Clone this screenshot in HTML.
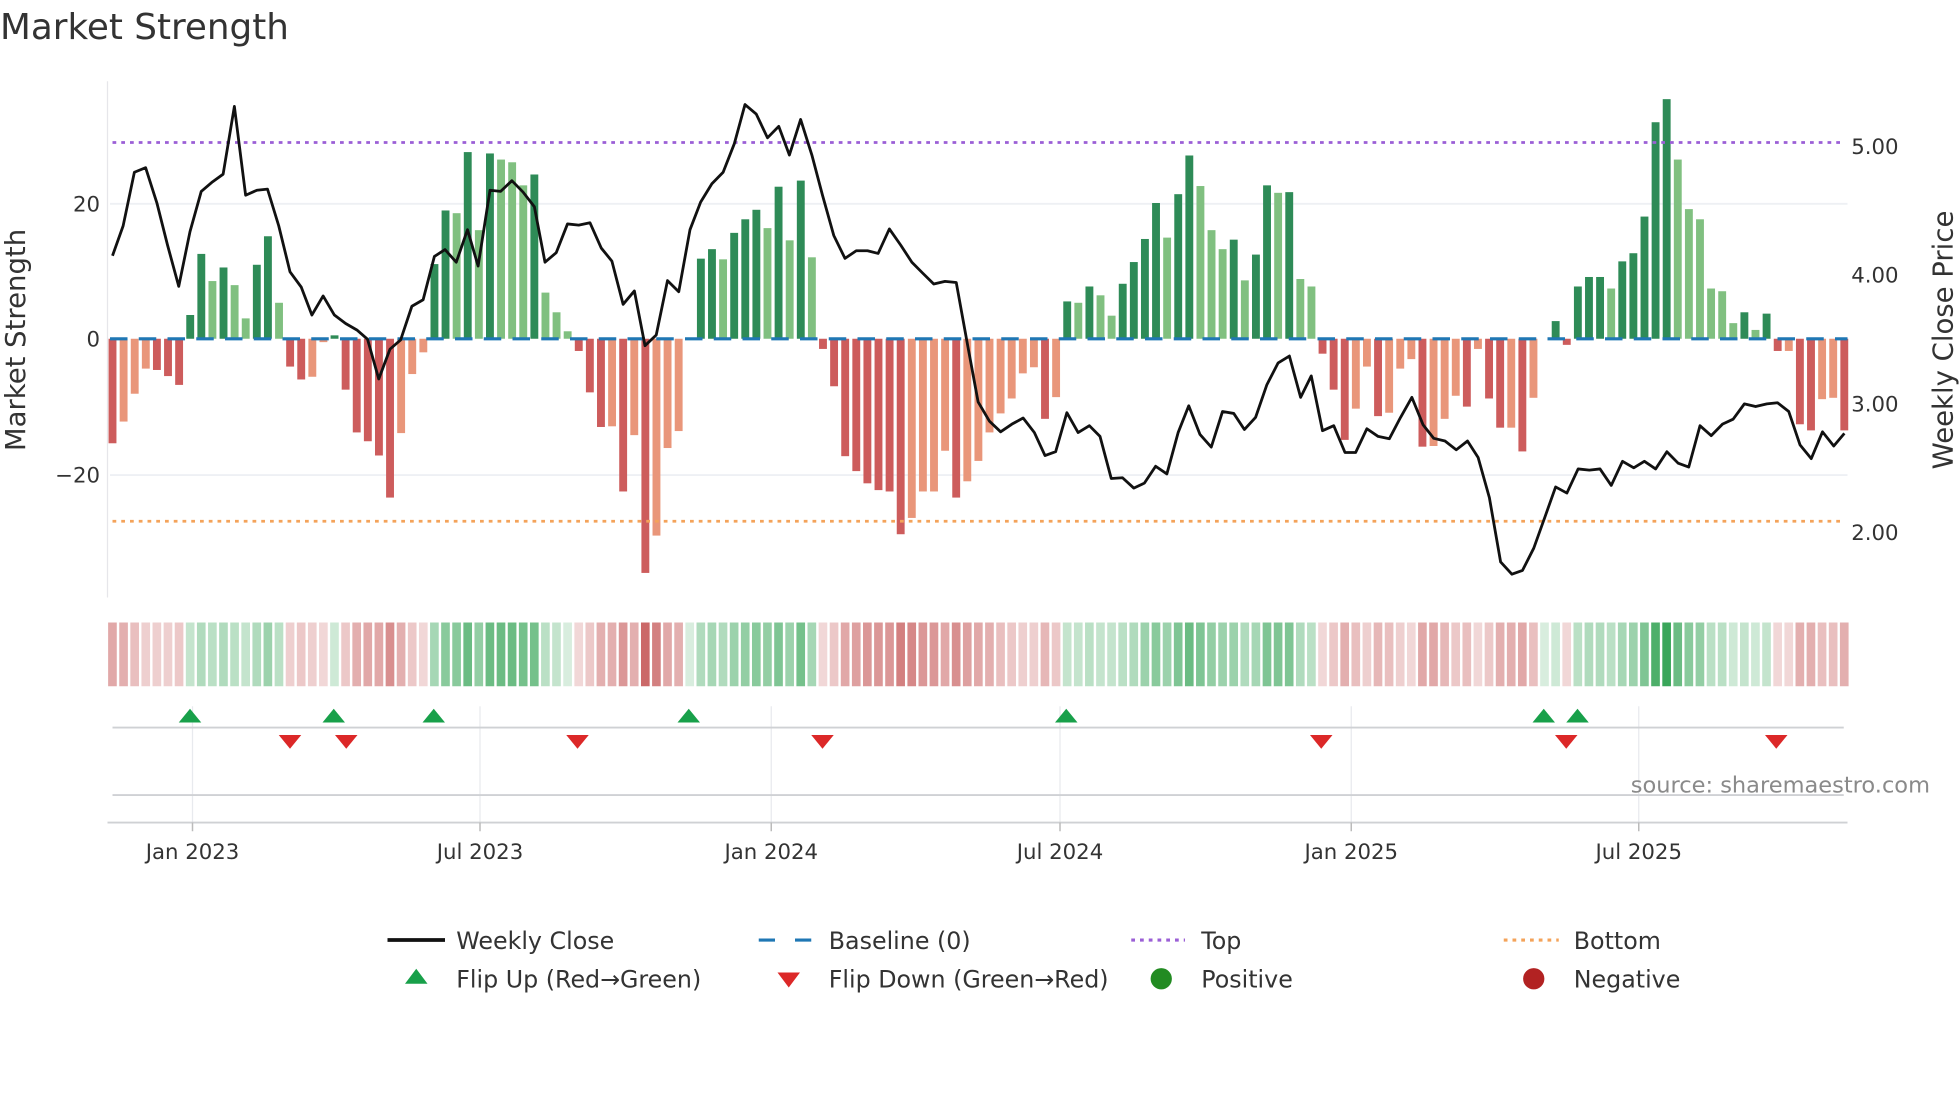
<!DOCTYPE html>
<html><head><meta charset="utf-8"><style>
html,body{margin:0;padding:0;background:#fff;}
svg{display:block;font-family:"DejaVu Sans","Liberation Sans",sans-serif;}
.b rect{width:0.71px}
.D{fill:#2e8b57}.L{fill:#80c080}.R{fill:#cd5c5c}.O{fill:#e9967a}
.h rect{width:0.78px;height:51px}
.hr{fill:#c86060}.hg{fill:#3aa65a}
.t{font-size:17px;fill:#333}
.lg{font-size:19px;fill:#333}
</style></head><body>
<svg width="1960" height="1102" viewBox="0 0 1568 881.6">
<rect width="1568" height="881.6" fill="#fff"/>
<text x="0" y="31" font-size="28.6" fill="#333">Market Strength</text>
<line x1="86" y1="65" x2="86" y2="478" stroke="#e6e6ea" stroke-width="1"/>
<line x1="88" y1="163" x2="1478" y2="163" stroke="#eef0f4" stroke-width="1.5"/>
<line x1="88" y1="380" x2="1478" y2="380" stroke="#eef0f4" stroke-width="1.5"/>
<text class="t" x="80" y="169" text-anchor="end">20</text>
<text class="t" x="80" y="277" text-anchor="end">0</text>
<text class="t" x="80" y="386" text-anchor="end">−20</text>
<text class="t" x="1481" y="123">5.00</text>
<text class="t" x="1481" y="226">4.00</text>
<text class="t" x="1481" y="329">3.00</text>
<text class="t" x="1481" y="432">2.00</text>
<text x="20" y="272" font-size="22" fill="#333" text-anchor="middle" transform="rotate(-90 20 272)">Market Strength</text>
<text x="1562" y="272" font-size="22" fill="#333" text-anchor="middle" transform="rotate(-90 1562 272)">Weekly Close Price</text>
<g class="b" transform="translate(86.85,271) scale(8.881,-5.43)">
<rect class="R" x="0" y="-15.4" height="15.4"/><rect class="O" x="1" y="-12.2" height="12.2"/><rect class="O" x="2" y="-8.1" height="8.1"/><rect class="O" x="3" y="-4.4" height="4.4"/><rect class="R" x="4" y="-4.6" height="4.6"/><rect class="R" x="5" y="-5.5" height="5.5"/><rect class="R" x="6" y="-6.8" height="6.8"/>
<rect class="D" x="7" y="0" height="3.5"/><rect class="D" x="8" y="0" height="12.5"/><rect class="L" x="9" y="0" height="8.5"/><rect class="D" x="10" y="0" height="10.5"/><rect class="L" x="11" y="0" height="7.9"/><rect class="L" x="12" y="0" height="3"/><rect class="D" x="13" y="0" height="10.9"/><rect class="D" x="14" y="0" height="15.1"/><rect class="L" x="15" y="0" height="5.3"/>
<rect class="R" x="16" y="-4.1" height="4.1"/><rect class="R" x="17" y="-6" height="6"/><rect class="O" x="18" y="-5.6" height="5.6"/><rect class="O" x="19" y="-0.5" height="0.5"/><rect class="D" x="20" y="0" height="0.5"/>
<rect class="R" x="21" y="-7.5" height="7.5"/><rect class="R" x="22" y="-13.8" height="13.8"/><rect class="R" x="23" y="-15.1" height="15.1"/><rect class="R" x="24" y="-17.2" height="17.2"/><rect class="R" x="25" y="-23.4" height="23.4"/><rect class="O" x="26" y="-13.9" height="13.9"/><rect class="O" x="27" y="-5.2" height="5.2"/><rect class="O" x="28" y="-2" height="2"/>
<rect class="D" x="29" y="0" height="11"/><rect class="D" x="30" y="0" height="18.9"/><rect class="L" x="31" y="0" height="18.5"/><rect class="D" x="32" y="0" height="27.5"/><rect class="L" x="33" y="0" height="16"/><rect class="D" x="34" y="0" height="27.3"/><rect class="L" x="35" y="0" height="26.4"/><rect class="L" x="36" y="0" height="26"/><rect class="L" x="37" y="0" height="22.6"/><rect class="D" x="38" y="0" height="24.2"/><rect class="L" x="39" y="0" height="6.8"/><rect class="L" x="40" y="0" height="3.9"/><rect class="L" x="41" y="0" height="1.1"/>
<rect class="R" x="42" y="-1.8" height="1.8"/><rect class="R" x="43" y="-7.9" height="7.9"/><rect class="R" x="44" y="-13" height="13"/><rect class="O" x="45" y="-12.9" height="12.9"/><rect class="R" x="46" y="-22.5" height="22.5"/><rect class="O" x="47" y="-14.2" height="14.2"/><rect class="R" x="48" y="-34.5" height="34.5"/><rect class="O" x="49" y="-29" height="29"/><rect class="O" x="50" y="-16.1" height="16.1"/><rect class="O" x="51" y="-13.6" height="13.6"/>
<rect class="D" x="53" y="0" height="11.8"/><rect class="D" x="54" y="0" height="13.2"/><rect class="L" x="55" y="0" height="11.7"/><rect class="D" x="56" y="0" height="15.6"/><rect class="D" x="57" y="0" height="17.6"/><rect class="D" x="58" y="0" height="19"/><rect class="L" x="59" y="0" height="16.3"/><rect class="D" x="60" y="0" height="22.4"/><rect class="L" x="61" y="0" height="14.5"/><rect class="D" x="62" y="0" height="23.3"/><rect class="L" x="63" y="0" height="12"/>
<rect class="R" x="64" y="-1.5" height="1.5"/><rect class="R" x="65" y="-7" height="7"/><rect class="R" x="66" y="-17.3" height="17.3"/><rect class="R" x="67" y="-19.5" height="19.5"/><rect class="R" x="68" y="-21.3" height="21.3"/><rect class="R" x="69" y="-22.3" height="22.3"/><rect class="R" x="70" y="-22.5" height="22.5"/><rect class="R" x="71" y="-28.8" height="28.8"/><rect class="O" x="72" y="-26.4" height="26.4"/><rect class="O" x="73" y="-22.5" height="22.5"/><rect class="O" x="74" y="-22.5" height="22.5"/><rect class="O" x="75" y="-16.5" height="16.5"/><rect class="R" x="76" y="-23.4" height="23.4"/><rect class="O" x="77" y="-21" height="21"/><rect class="O" x="78" y="-18" height="18"/><rect class="O" x="79" y="-13.8" height="13.8"/><rect class="O" x="80" y="-11" height="11"/><rect class="O" x="81" y="-8.8" height="8.8"/><rect class="O" x="82" y="-5.1" height="5.1"/><rect class="O" x="83" y="-4.2" height="4.2"/><rect class="R" x="84" y="-11.8" height="11.8"/><rect class="O" x="85" y="-8.6" height="8.6"/>
<rect class="D" x="86" y="0" height="5.5"/><rect class="L" x="87" y="0" height="5.3"/><rect class="D" x="88" y="0" height="7.7"/><rect class="L" x="89" y="0" height="6.4"/><rect class="L" x="90" y="0" height="3.4"/><rect class="D" x="91" y="0" height="8.1"/><rect class="D" x="92" y="0" height="11.3"/><rect class="D" x="93" y="0" height="14.7"/><rect class="D" x="94" y="0" height="20"/><rect class="L" x="95" y="0" height="14.9"/><rect class="D" x="96" y="0" height="21.3"/><rect class="D" x="97" y="0" height="27"/><rect class="L" x="98" y="0" height="22.5"/><rect class="L" x="99" y="0" height="16"/><rect class="L" x="100" y="0" height="13.2"/><rect class="D" x="101" y="0" height="14.6"/><rect class="L" x="102" y="0" height="8.6"/><rect class="D" x="103" y="0" height="12.4"/><rect class="D" x="104" y="0" height="22.6"/><rect class="L" x="105" y="0" height="21.5"/><rect class="D" x="106" y="0" height="21.6"/><rect class="L" x="107" y="0" height="8.8"/><rect class="L" x="108" y="0" height="7.7"/>
<rect class="R" x="109" y="-2.2" height="2.2"/><rect class="R" x="110" y="-7.5" height="7.5"/><rect class="R" x="111" y="-14.9" height="14.9"/><rect class="O" x="112" y="-10.3" height="10.3"/><rect class="O" x="113" y="-4.1" height="4.1"/><rect class="R" x="114" y="-11.4" height="11.4"/><rect class="O" x="115" y="-10.9" height="10.9"/><rect class="O" x="116" y="-4.4" height="4.4"/><rect class="O" x="117" y="-3" height="3"/><rect class="R" x="118" y="-15.9" height="15.9"/><rect class="O" x="119" y="-15.8" height="15.8"/><rect class="O" x="120" y="-11.8" height="11.8"/><rect class="O" x="121" y="-8.4" height="8.4"/><rect class="R" x="122" y="-10" height="10"/><rect class="O" x="123" y="-1.5" height="1.5"/><rect class="R" x="124" y="-8.8" height="8.8"/><rect class="R" x="125" y="-13.1" height="13.1"/><rect class="O" x="126" y="-13.1" height="13.1"/><rect class="R" x="127" y="-16.6" height="16.6"/><rect class="O" x="128" y="-8.7" height="8.7"/>
<rect class="D" x="130" y="0" height="2.6"/><rect class="R" x="131" y="-0.9" height="0.9"/>
<rect class="D" x="132" y="0" height="7.7"/><rect class="D" x="133" y="0" height="9.1"/><rect class="D" x="134" y="0" height="9.1"/><rect class="L" x="135" y="0" height="7.4"/><rect class="D" x="136" y="0" height="11.4"/><rect class="D" x="137" y="0" height="12.6"/><rect class="D" x="138" y="0" height="18"/><rect class="D" x="139" y="0" height="31.9"/><rect class="D" x="140" y="0" height="35.3"/><rect class="L" x="141" y="0" height="26.4"/><rect class="L" x="142" y="0" height="19.1"/><rect class="L" x="143" y="0" height="17.6"/><rect class="L" x="144" y="0" height="7.4"/><rect class="L" x="145" y="0" height="7"/><rect class="L" x="146" y="0" height="2.3"/><rect class="D" x="147" y="0" height="3.9"/><rect class="L" x="148" y="0" height="1.3"/><rect class="D" x="149" y="0" height="3.7"/>
<rect class="R" x="150" y="-1.8" height="1.8"/><rect class="O" x="151" y="-1.8" height="1.8"/><rect class="R" x="152" y="-12.6" height="12.6"/><rect class="R" x="153" y="-13.5" height="13.5"/><rect class="O" x="154" y="-8.9" height="8.9"/><rect class="O" x="155" y="-8.7" height="8.7"/><rect class="R" x="156" y="-13.5" height="13.5"/>
</g>
<line x1="88" y1="271" x2="1478" y2="271" stroke="#1f77b4" stroke-width="2.5" stroke-dasharray="14,9"/>
<line x1="90" y1="114" x2="1476" y2="114" stroke="#9b5fd6" stroke-width="2.2" stroke-dasharray="3,4"/>
<line x1="90" y1="417" x2="1476" y2="417" stroke="#f4a35a" stroke-width="2.2" stroke-dasharray="3,4"/>
<g transform="scale(0.5,0.30625)">
<polyline fill="none" stroke="#111" stroke-width="2.8" vector-effect="non-scaling-stroke" stroke-linejoin="round" points="180,668 197,590 215,450 233,438 251,530 268,640 286,748 304,605 322,500 340,475 357,455 375,278 393,510 411,497 428,494 446,590 464,710 482,750 499,823 517,773 535,823 553,845 571,862 588,886 606,990 624,912 641,888 659,800 677,783 695,670 712,652 730,685 748,600 765,695 784,497 801,500 819,472 837,502 855,540 872,685 890,660 908,585 926,588 944,582 962,648 979,682 997,795 1015,760 1032,903 1050,875 1068,733 1086,762 1104,600 1121,528 1139,480 1157,450 1175,375 1192,273 1210,298 1228,360 1246,330 1263,405 1281,312 1299,405 1316,510 1334,615 1352,675 1370,655 1388,655 1405,662 1423,598 1441,640 1459,685 1476,713 1494,742 1512,735 1530,738 1548,900 1565,1050 1583,1100 1601,1128 1619,1108 1637,1092 1655,1130 1672,1190 1689,1180 1707,1078 1725,1130 1743,1112 1760,1140 1778,1250 1796,1248 1814,1275 1831,1262 1849,1218 1867,1238 1885,1130 1902,1060 1920,1135 1938,1168 1956,1075 1974,1080 1991,1122 2009,1090 2027,1005 2045,948 2063,930 2081,1038 2098,982 2116,1125 2134,1112 2152,1182 2169,1182 2187,1120 2205,1140 2223,1146 2241,1090 2259,1038 2277,1110 2294,1145 2312,1152 2330,1175 2348,1152 2365,1195 2383,1300 2401,1468 2419,1500 2436,1490 2454,1432 2472,1350 2489,1272 2507,1288 2525,1225 2543,1228 2560,1225 2578,1268 2596,1205 2614,1222 2631,1205 2649,1225 2667,1180 2685,1210 2702,1220 2720,1112 2738,1138 2756,1108 2773,1095 2791,1055 2809,1062 2827,1055 2844,1052 2862,1075 2880,1162 2898,1198 2916,1128 2934,1165 2951,1132"/>
</g>
<g class="h" transform="translate(86.5,498) scale(8.881,1)">
<rect class="hr" x="0" fill-opacity=".55"/><rect class="hr" x="1" fill-opacity=".5"/><rect class="hr" x="2" fill-opacity=".4"/><rect class="hr" x="3" fill-opacity=".3"/><rect class="hr" x="4" fill-opacity=".3"/><rect class="hr" x="5" fill-opacity=".3"/><rect class="hr" x="6" fill-opacity=".35"/>
<rect class="hg" x="7" fill-opacity=".3"/><rect class="hg" x="8" fill-opacity=".4"/><rect class="hg" x="9" fill-opacity=".35"/><rect class="hg" x="10" fill-opacity=".4"/><rect class="hg" x="11" fill-opacity=".35"/><rect class="hg" x="12" fill-opacity=".3"/><rect class="hg" x="13" fill-opacity=".4"/><rect class="hg" x="14" fill-opacity=".5"/><rect class="hg" x="15" fill-opacity=".35"/>
<rect class="hr" x="16" fill-opacity=".3"/><rect class="hr" x="17" fill-opacity=".35"/><rect class="hr" x="18" fill-opacity=".3"/><rect class="hr" x="19" fill-opacity=".25"/><rect class="hg" x="20" fill-opacity=".25"/>
<rect class="hr" x="21" fill-opacity=".35"/><rect class="hr" x="22" fill-opacity=".5"/><rect class="hr" x="23" fill-opacity=".55"/><rect class="hr" x="24" fill-opacity=".55"/><rect class="hr" x="25" fill-opacity=".7"/><rect class="hr" x="26" fill-opacity=".5"/><rect class="hr" x="27" fill-opacity=".35"/><rect class="hr" x="28" fill-opacity=".25"/>
<rect class="hg" x="29" fill-opacity=".45"/><rect class="hg" x="30" fill-opacity=".6"/><rect class="hg" x="31" fill-opacity=".6"/><rect class="hg" x="32" fill-opacity=".75"/><rect class="hg" x="33" fill-opacity=".55"/><rect class="hg" x="34" fill-opacity=".75"/><rect class="hg" x="35" fill-opacity=".75"/><rect class="hg" x="36" fill-opacity=".75"/><rect class="hg" x="37" fill-opacity=".7"/><rect class="hg" x="38" fill-opacity=".7"/><rect class="hg" x="39" fill-opacity=".35"/><rect class="hg" x="40" fill-opacity=".3"/><rect class="hg" x="41" fill-opacity=".2"/>
<rect class="hr" x="42" fill-opacity=".25"/><rect class="hr" x="43" fill-opacity=".35"/><rect class="hr" x="44" fill-opacity=".5"/><rect class="hr" x="45" fill-opacity=".5"/><rect class="hr" x="46" fill-opacity=".65"/><rect class="hr" x="47" fill-opacity=".5"/><rect class="hr" x="48" fill-opacity=".95"/><rect class="hr" x="49" fill-opacity=".8"/><rect class="hr" x="50" fill-opacity=".55"/><rect class="hr" x="51" fill-opacity=".5"/>
<rect class="hg" x="52" fill-opacity=".2"/><rect class="hg" x="53" fill-opacity=".4"/><rect class="hg" x="54" fill-opacity=".45"/><rect class="hg" x="55" fill-opacity=".4"/><rect class="hg" x="56" fill-opacity=".5"/><rect class="hg" x="57" fill-opacity=".55"/><rect class="hg" x="58" fill-opacity=".6"/><rect class="hg" x="59" fill-opacity=".55"/><rect class="hg" x="60" fill-opacity=".65"/><rect class="hg" x="61" fill-opacity=".5"/><rect class="hg" x="62" fill-opacity=".7"/><rect class="hg" x="63" fill-opacity=".45"/>
<rect class="hr" x="64" fill-opacity=".25"/><rect class="hr" x="65" fill-opacity=".35"/><rect class="hr" x="66" fill-opacity=".55"/><rect class="hr" x="67" fill-opacity=".6"/><rect class="hr" x="68" fill-opacity=".65"/><rect class="hr" x="69" fill-opacity=".65"/><rect class="hr" x="70" fill-opacity=".65"/><rect class="hr" x="71" fill-opacity=".8"/><rect class="hr" x="72" fill-opacity=".75"/><rect class="hr" x="73" fill-opacity=".65"/><rect class="hr" x="74" fill-opacity=".65"/><rect class="hr" x="75" fill-opacity=".55"/><rect class="hr" x="76" fill-opacity=".7"/><rect class="hr" x="77" fill-opacity=".6"/><rect class="hr" x="78" fill-opacity=".55"/><rect class="hr" x="79" fill-opacity=".5"/><rect class="hr" x="80" fill-opacity=".4"/><rect class="hr" x="81" fill-opacity=".35"/><rect class="hr" x="82" fill-opacity=".3"/><rect class="hr" x="83" fill-opacity=".3"/><rect class="hr" x="84" fill-opacity=".45"/><rect class="hr" x="85" fill-opacity=".35"/>
<rect class="hg" x="86" fill-opacity=".3"/><rect class="hg" x="87" fill-opacity=".3"/><rect class="hg" x="88" fill-opacity=".35"/><rect class="hg" x="89" fill-opacity=".3"/><rect class="hg" x="90" fill-opacity=".3"/><rect class="hg" x="91" fill-opacity=".35"/><rect class="hg" x="92" fill-opacity=".4"/><rect class="hg" x="93" fill-opacity=".5"/><rect class="hg" x="94" fill-opacity=".6"/><rect class="hg" x="95" fill-opacity=".5"/><rect class="hg" x="96" fill-opacity=".65"/><rect class="hg" x="97" fill-opacity=".75"/><rect class="hg" x="98" fill-opacity=".65"/><rect class="hg" x="99" fill-opacity=".55"/><rect class="hg" x="100" fill-opacity=".5"/><rect class="hg" x="101" fill-opacity=".5"/><rect class="hg" x="102" fill-opacity=".4"/><rect class="hg" x="103" fill-opacity=".45"/><rect class="hg" x="104" fill-opacity=".65"/><rect class="hg" x="105" fill-opacity=".65"/><rect class="hg" x="106" fill-opacity=".65"/><rect class="hg" x="107" fill-opacity=".4"/><rect class="hg" x="108" fill-opacity=".35"/>
<rect class="hr" x="109" fill-opacity=".25"/><rect class="hr" x="110" fill-opacity=".35"/><rect class="hr" x="111" fill-opacity=".5"/><rect class="hr" x="112" fill-opacity=".4"/><rect class="hr" x="113" fill-opacity=".3"/><rect class="hr" x="114" fill-opacity=".45"/><rect class="hr" x="115" fill-opacity=".4"/><rect class="hr" x="116" fill-opacity=".3"/><rect class="hr" x="117" fill-opacity=".25"/><rect class="hr" x="118" fill-opacity=".55"/><rect class="hr" x="119" fill-opacity=".55"/><rect class="hr" x="120" fill-opacity=".45"/><rect class="hr" x="121" fill-opacity=".35"/><rect class="hr" x="122" fill-opacity=".4"/><rect class="hr" x="123" fill-opacity=".25"/><rect class="hr" x="124" fill-opacity=".35"/><rect class="hr" x="125" fill-opacity=".5"/><rect class="hr" x="126" fill-opacity=".5"/><rect class="hr" x="127" fill-opacity=".55"/><rect class="hr" x="128" fill-opacity=".4"/>
<rect class="hg" x="129" fill-opacity=".2"/><rect class="hg" x="130" fill-opacity=".25"/><rect class="hr" x="131" fill-opacity=".25"/>
<rect class="hg" x="132" fill-opacity=".35"/><rect class="hg" x="133" fill-opacity=".4"/><rect class="hg" x="134" fill-opacity=".4"/><rect class="hg" x="135" fill-opacity=".35"/><rect class="hg" x="136" fill-opacity=".45"/><rect class="hg" x="137" fill-opacity=".5"/><rect class="hg" x="138" fill-opacity=".65"/><rect class="hg" x="139" fill-opacity=".9"/><rect class="hg" x="140" fill-opacity="1"/><rect class="hg" x="141" fill-opacity=".75"/><rect class="hg" x="142" fill-opacity=".6"/><rect class="hg" x="143" fill-opacity=".55"/><rect class="hg" x="144" fill-opacity=".35"/><rect class="hg" x="145" fill-opacity=".35"/><rect class="hg" x="146" fill-opacity=".25"/><rect class="hg" x="147" fill-opacity=".3"/><rect class="hg" x="148" fill-opacity=".25"/><rect class="hg" x="149" fill-opacity=".3"/>
<rect class="hr" x="150" fill-opacity=".25"/><rect class="hr" x="151" fill-opacity=".25"/><rect class="hr" x="152" fill-opacity=".5"/><rect class="hr" x="153" fill-opacity=".5"/><rect class="hr" x="154" fill-opacity=".4"/><rect class="hr" x="155" fill-opacity=".4"/><rect class="hr" x="156" fill-opacity=".5"/>
</g>
<g stroke="#e8eaee" stroke-width="1">
<line x1="154" y1="565" x2="154" y2="658"/><line x1="384" y1="565" x2="384" y2="658"/><line x1="617" y1="565" x2="617" y2="658"/><line x1="848" y1="565" x2="848" y2="658"/><line x1="1081" y1="565" x2="1081" y2="658"/><line x1="1311" y1="565" x2="1311" y2="658"/>
</g>
<line x1="90" y1="582" x2="1475" y2="582" stroke="#cfd1d4" stroke-width="1.5"/>
<line x1="90" y1="636" x2="1475" y2="636" stroke="#cfd1d4" stroke-width="1.5"/>
<line x1="86" y1="658" x2="1478" y2="658" stroke="#cfd1d4" stroke-width="1.5"/>
<g stroke="#bbb" stroke-width="1.2"><line x1="154" y1="658" x2="154" y2="665"/><line x1="384" y1="658" x2="384" y2="665"/><line x1="617" y1="658" x2="617" y2="665"/><line x1="848" y1="658" x2="848" y2="665"/><line x1="1081" y1="658" x2="1081" y2="665"/><line x1="1311" y1="658" x2="1311" y2="665"/></g>
<g fill="#18a04a">
<path d="M143,578 L152,567 L161,578Z"/><path d="M258,578 L267,567 L276,578Z"/><path d="M338,578 L347,567 L356,578Z"/><path d="M542,578 L551,567 L560,578Z"/><path d="M844,578 L853,567 L862,578Z"/><path d="M1226,578 L1235,567 L1244,578Z"/><path d="M1253,578 L1262,567 L1271,578Z"/>
</g>
<g fill="#dc2828">
<path d="M223,588 L232,599 L241,588Z"/><path d="M268,588 L277,599 L286,588Z"/><path d="M453,588 L462,599 L471,588Z"/><path d="M649,588 L658,599 L667,588Z"/><path d="M1048,588 L1057,599 L1066,588Z"/><path d="M1244,588 L1253,599 L1262,588Z"/><path d="M1412,588 L1421,599 L1430,588Z"/>
</g>
<text x="1544" y="634" font-size="18" fill="#8a8a8a" text-anchor="end">source: sharemaestro.com</text>
<g class="t" text-anchor="middle">
<text x="154" y="687">Jan 2023</text><text x="384" y="687">Jul 2023</text><text x="617" y="687">Jan 2024</text><text x="848" y="687">Jul 2024</text><text x="1081" y="687">Jan 2025</text><text x="1311" y="687">Jul 2025</text>
</g>
<line x1="310" y1="752" x2="356" y2="752" stroke="#111" stroke-width="3"/>
<line x1="607" y1="752" x2="650" y2="752" stroke="#1f77b4" stroke-width="2.5" stroke-dasharray="13,16"/>
<line x1="905" y1="752" x2="948" y2="752" stroke="#9b5fd6" stroke-width="2.5" stroke-dasharray="3,4"/>
<line x1="1203" y1="752" x2="1247" y2="752" stroke="#f4a35a" stroke-width="2.5" stroke-dasharray="3,4"/>
<path d="M324,787 L333,775 L342,787Z" fill="#18a04a"/>
<path d="M622,778 L631,790 L640,778Z" fill="#dc2828"/>
<circle cx="929" cy="783" r="8.5" fill="#228b22"/>
<circle cx="1227" cy="783" r="8.5" fill="#b22222"/>
<g class="lg">
<text x="365" y="759">Weekly Close</text><text x="663" y="759">Baseline (0)</text><text x="961" y="759">Top</text><text x="1259" y="759">Bottom</text>
<text x="365" y="790">Flip Up (Red→Green)</text><text x="663" y="790">Flip Down (Green→Red)</text><text x="961" y="790">Positive</text><text x="1259" y="790">Negative</text>
</g>
</svg>
</body></html>
